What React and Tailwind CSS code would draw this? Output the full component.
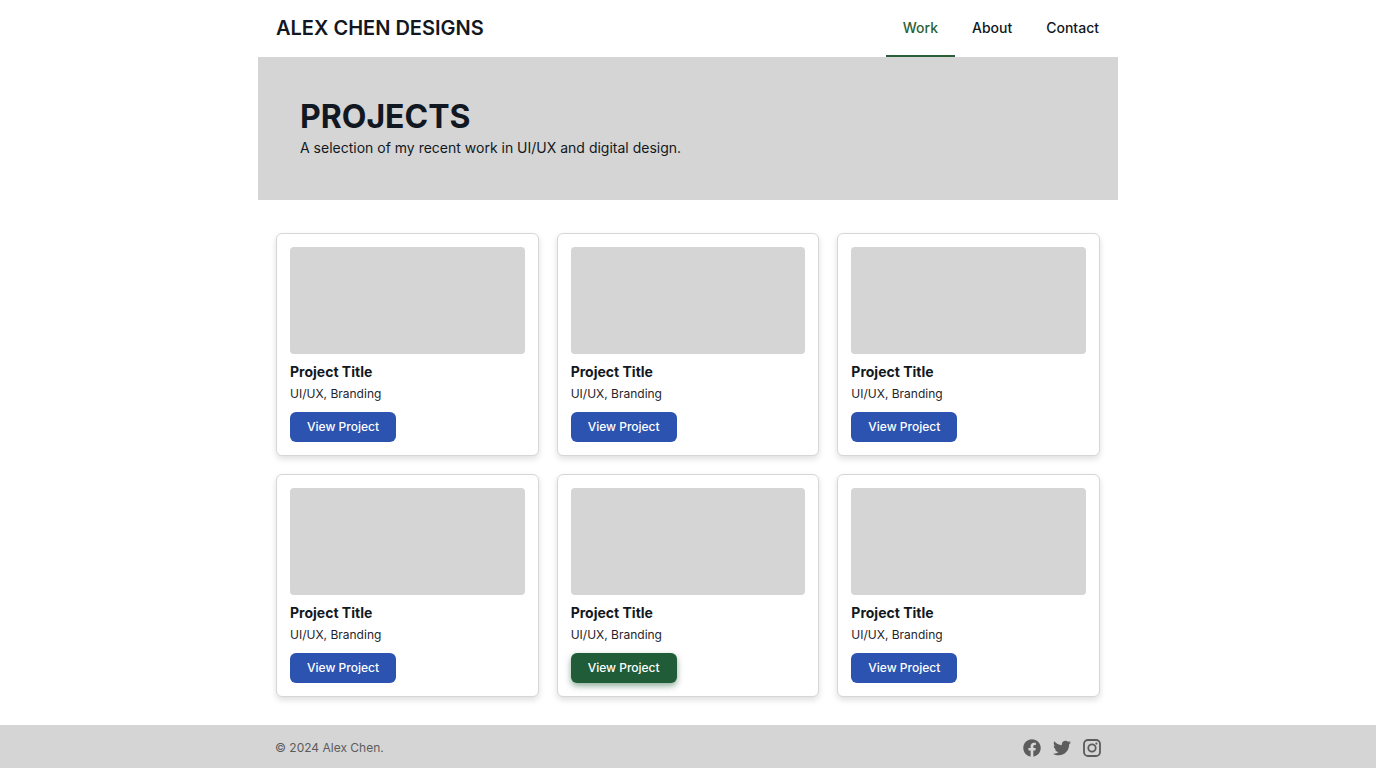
import { FaFacebook, FaTwitter } from "react-icons/fa";

const NAV = [
  { label: "Work", href: "#work", active: true },
  { label: "About", href: "#about" },
  { label: "Contact", href: "#contact" },
];

const PROJECTS = [1, 2, 3, 4, 5, 6].map((id) => ({
  id,
  title: "Project Title",
  tags: "UI/UX, Branding",
  highlighted: id === 5,
}));

function InstagramIcon() {
  return (
    <svg width="18" height="18" viewBox="0 0 18 18" fill="none" aria-hidden="true">
      <rect x="1" y="1" width="16" height="16" rx="4" stroke="currentColor" strokeWidth="1.8" />
      <circle cx="9" cy="9" r="3.7" stroke="currentColor" strokeWidth="1.8" />
      <circle cx="13.4" cy="4.6" r="1.1" fill="currentColor" />
    </svg>
  );
}

function Header() {
  return (
    <header className="mx-auto flex h-[57px] w-full max-w-[860px] items-stretch justify-between pr-[2px] pl-[18px]">
      <a href="#home" className="flex items-center pb-[2px] text-[20px] font-semibold">
        ALEX CHEN DESIGNS
      </a>
      <nav className="flex">
        {NAV.map((item) => (
          <a
            key={item.label}
            href={item.href}
            aria-current={item.active ? "page" : undefined}
            className={
              item.active
                ? "flex items-center border-b-2 border-[#2a5f3a] px-[17px] text-[14px] font-medium text-[#2b6336]"
                : "flex items-center border-b-2 border-transparent px-[17px] text-[14px] font-medium"
            }
          >
            {item.label}
          </a>
        ))}
      </nav>
    </header>
  );
}

function ProjectCard({ project }) {
  return (
    <article className="rounded-md border border-[#d6d6d8] bg-white p-[13px] shadow-[0_3px_6px_rgba(0,0,0,0.13)]">
      <div className="h-[107px] rounded-sm bg-[#d5d5d5]" />
      <h2 className="mt-2 text-[14px] leading-5 font-bold">{project.title}</h2>
      <p className="mt-[3px] text-[12px] leading-[18px] text-[#1f242b]">{project.tags}</p>
      <button
        type="button"
        className={
          project.highlighted
            ? "mt-[9px] flex h-[30px] items-center rounded-md bg-[#215c39] px-[17px] text-[12px] font-medium text-white shadow-[0_3px_6px_rgba(33,92,57,0.5)]"
            : "mt-[9px] flex h-[30px] items-center rounded-md bg-[#2b53af] px-[17px] text-[12px] font-medium text-white"
        }
      >
        View Project
      </button>
    </article>
  );
}

function Footer() {
  return (
    <footer className="bg-[#d5d5d5] text-[#5c5c5c]">
      <div className="mx-auto flex h-[43px] w-full max-w-[860px] items-center justify-between px-[17px] pt-[2px]">
        <p className="text-[12px]">© 2024 Alex Chen.</p>
        <div className="flex items-center gap-3">
          <a href="#facebook" aria-label="Facebook">
            <FaFacebook size={18} />
          </a>
          <a href="#twitter" aria-label="Twitter">
            <FaTwitter size={18} />
          </a>
          <a href="#instagram" aria-label="Instagram">
            <InstagramIcon />
          </a>
        </div>
      </div>
    </footer>
  );
}

export default function App() {
  return (
    <div className="flex min-h-screen flex-col bg-white font-['Inter',sans-serif] text-[#121821]">
      <Header />
      <main className="mx-auto w-full max-w-[860px] flex-1">
        <section className="bg-[#d5d5d5] px-[42px] pt-10 pb-[41px]">
          <h1 className="text-[32px] leading-10 font-bold">PROJECTS</h1>
          <p className="text-[14px] leading-[22px]">
            A selection of my recent work in UI/UX and digital design.
          </p>
        </section>
        <section
          aria-label="Projects"
          className="grid grid-cols-1 gap-[18px] px-[18px] pt-[33px] pb-7 sm:grid-cols-2 md:grid-cols-3"
        >
          {PROJECTS.map((project) => (
            <ProjectCard key={project.id} project={project} />
          ))}
        </section>
      </main>
      <Footer />
    </div>
  );
}
